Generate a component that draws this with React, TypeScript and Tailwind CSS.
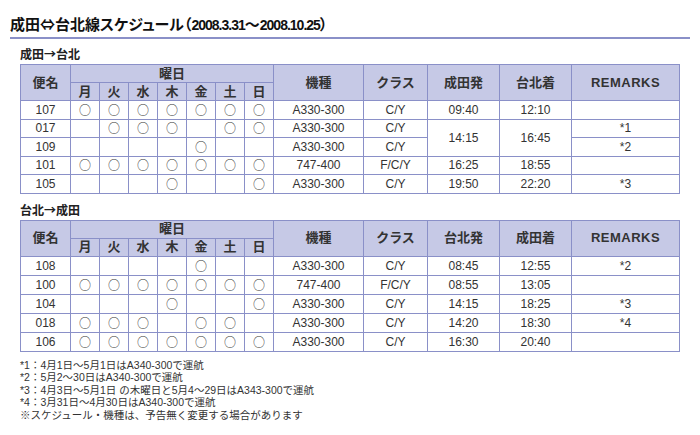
import React from 'react'

type Row = {
  no: string
  days: boolean[]
  type: string
  cls: string
  dep?: string
  arr?: string
  span?: number
  skipTimes?: boolean
  remark: string
}

const outbound: Row[] = [
  { no: '107', days: [true, true, true, true, true, true, true], type: 'A330-300', cls: 'C/Y', dep: '09:40', arr: '12:10', remark: '' },
  { no: '017', days: [false, true, true, true, false, true, true], type: 'A330-300', cls: 'C/Y', dep: '14:15', arr: '16:45', span: 2, remark: '*1' },
  { no: '109', days: [false, false, false, false, true, false, false], type: 'A330-300', cls: 'C/Y', skipTimes: true, remark: '*2' },
  { no: '101', days: [true, true, true, true, true, true, true], type: '747-400', cls: 'F/C/Y', dep: '16:25', arr: '18:55', remark: '' },
  { no: '105', days: [false, false, false, true, false, false, true], type: 'A330-300', cls: 'C/Y', dep: '19:50', arr: '22:20', remark: '*3' },
]

const inbound: Row[] = [
  { no: '108', days: [false, false, false, false, true, false, false], type: 'A330-300', cls: 'C/Y', dep: '08:45', arr: '12:55', remark: '*2' },
  { no: '100', days: [true, true, true, true, true, true, true], type: '747-400', cls: 'F/C/Y', dep: '08:55', arr: '13:05', remark: '' },
  { no: '104', days: [false, false, false, true, false, false, true], type: 'A330-300', cls: 'C/Y', dep: '14:15', arr: '18:25', remark: '*3' },
  { no: '018', days: [true, true, true, false, true, true, false], type: 'A330-300', cls: 'C/Y', dep: '14:20', arr: '18:30', remark: '*4' },
  { no: '106', days: [true, true, true, true, true, true, true], type: 'A330-300', cls: 'C/Y', dep: '16:30', arr: '20:40', remark: '' },
]

const dayNames = ['月', '火', '水', '木', '金', '土', '日']

const th = 'border border-[#8a90c8] bg-[#c6c9e6] font-bold text-[#333] text-[13px] leading-[14px] text-center p-0'
const td = 'border border-[#8a90c8] text-center text-[12px] text-[#333] p-0 leading-[16px]'
const cjk = "font-['Noto_Sans_CJK_JP']"
const num = 'text-[14px] tracking-[-1px]'

function Schedule({ rows, dep, arr, rowH }: { rows: Row[]; dep: string; arr: string; rowH: string }) {
  return (
    <table className="border-collapse table-fixed w-[659px]">
      <colgroup>
        <col className="w-[50px]" />
        {dayNames.map((d) => (
          <col key={d} className="w-[29px]" />
        ))}
        <col className="w-[90px]" />
        <col className="w-[64px]" />
        <col className="w-[72px]" />
        <col className="w-[72px]" />
        <col className="w-[108px]" />
      </colgroup>
      <thead>
        <tr className="h-[18px]">
          <th rowSpan={2} className={th}>便名</th>
          <th colSpan={7} className={th + ' h-[18px]'}>曜日</th>
          <th rowSpan={2} className={th}>機種</th>
          <th rowSpan={2} className={th}>クラス</th>
          <th rowSpan={2} className={th}>{dep}</th>
          <th rowSpan={2} className={th}>{arr}</th>
          <th rowSpan={2} className={th + ' tracking-[0.5px]'}>REMARKS</th>
        </tr>
        <tr className="h-[18px]">
          {dayNames.map((d) => (
            <th key={d} className={th + ' h-[18px]'}>{d}</th>
          ))}
        </tr>
      </thead>
      <tbody>
        {rows.map((r) => (
          <tr key={r.no} className={rowH}>
            <td className={td}>{r.no}</td>
            {r.days.map((on, i) => (
              <td key={i} className={td + ' ' + cjk}>{on ? '○' : ''}</td>
            ))}
            <td className={td}>{r.type}</td>
            <td className={td}>{r.cls}</td>
            {!r.skipTimes && (
              <>
                <td rowSpan={r.span} className={td}>{r.dep}</td>
                <td rowSpan={r.span} className={td}>{r.arr}</td>
              </>
            )}
            <td className={td}>{r.remark}</td>
          </tr>
        ))}
      </tbody>
    </table>
  )
}

export default function App() {
  return (
    <div
      className="w-[700px] h-[435px] bg-white text-[#333] overflow-hidden"
      style={{ fontFamily: '"Liberation Sans", "Noto Sans CJK JP", sans-serif' }}
    >
      <div className="mx-[10px] pt-[14px]">
        <h1 className="text-[15px] font-bold leading-[20px] text-[#111] pb-[2px] border-b-2 border-[#8a90c8] [font-feature-settings:'palt']">
          <span className={cjk}>成田⇔台北線スケジュール（</span>
          <span className={num}>2008.3.31</span>
          <span className={cjk}>～</span>
          <span className={num}>2008.10.25</span>
          <span className={cjk}>）</span>
        </h1>
        <div className="pl-[10px]">
          <h2 className="mt-[7px] text-[12px] font-bold leading-[16px] text-[#222]">
            成田<span className={cjk}>→</span>台北
          </h2>
          <div className="mt-[1px]">
            <Schedule rows={outbound} dep="成田発" arr="台北着" rowH="h-[18.5px]" />
          </div>
          <h2 className="mt-[8px] text-[12px] font-bold leading-[16px] text-[#222]">
            台北<span className={cjk}>→</span>成田
          </h2>
          <div className="mt-[1px]">
            <Schedule rows={inbound} dep="台北発" arr="成田着" rowH="h-[19px]" />
          </div>
          <ul className="mt-[7px] text-[10.5px] leading-[12.5px] text-[#333]">
            <li>*1：4月1日～5月1日はA340-300で運航</li>
            <li>*2：5月2～30日はA340-300で運航</li>
            <li>*3：4月3日～5月1日 の木曜日と5月4～29日はA343-300で運航</li>
            <li>*4：3月31日～4月30日はA340-300で運航</li>
            <li>※スケジュール・機種は、予告無く変更する場合があります</li>
          </ul>
        </div>
      </div>
    </div>
  )
}
